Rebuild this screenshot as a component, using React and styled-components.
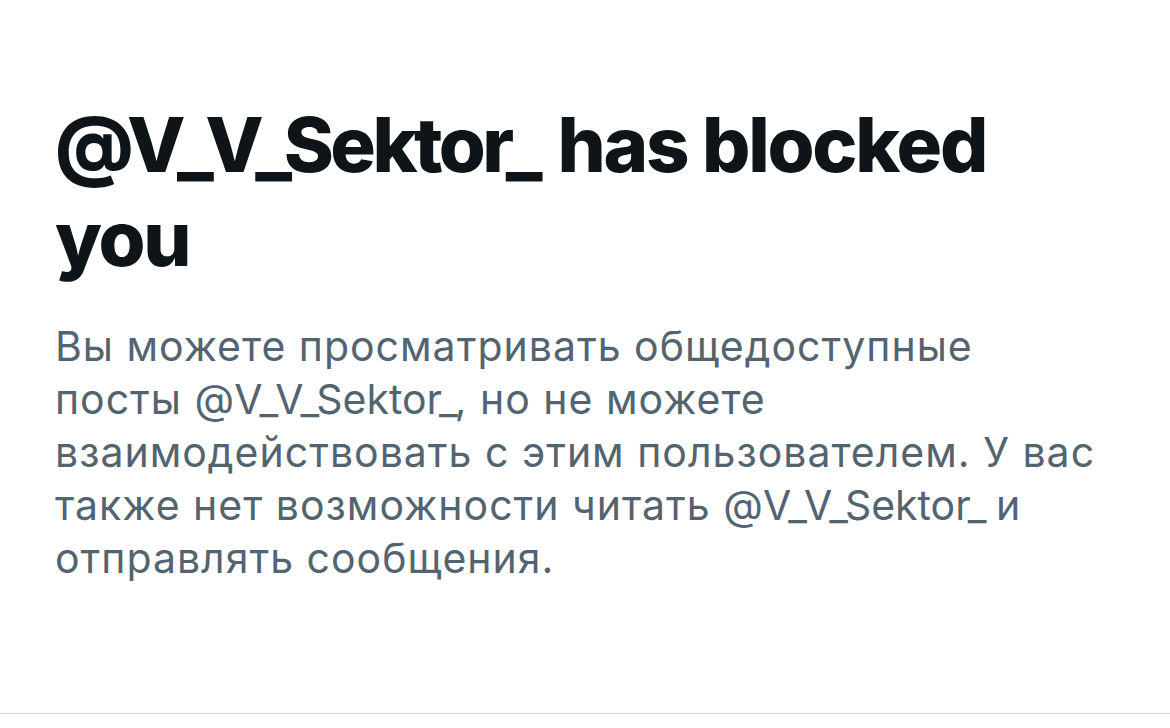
import styled, { createGlobalStyle } from "styled-components"

const GlobalStyle = createGlobalStyle`
    html, body {
        margin: 0;
        padding: 0;
        background: #ffffff;
    }
`

const Page = styled.div`
    width: 1170px;
    height: 714px;
    box-sizing: border-box;
    display: flex;
    flex-direction: column;
    border-bottom: 1px solid #d4d4d4;
    background: #ffffff;
`

const Content = styled.div`
    padding: 97px 40px 0 55px;
    display: flex;
    flex-direction: column;
`

const Title = styled.h1`
    margin: 0;
    font-family: Inter, "Liberation Sans", sans-serif;
    font-weight: 800;
    font-size: 76px;
    line-height: 94px;
    letter-spacing: -2.2px;
    color: #0f1419;
    max-width: 1000px;
`

const Desc = styled.p`
    margin: 35px 0 0;
    font-family: Inter, "Liberation Sans", sans-serif;
    font-weight: 400;
    font-size: 41px;
    line-height: 53px;
    letter-spacing: 1px;
    color: #536471;
    white-space: nowrap;
`

const HandleText = styled.span`
    letter-spacing: ${props => props.spacing}px;
    margin-right: ${props => props.after}px;
`

const Under = styled.span`
    margin: 0 ${props => props.tight}px;
`

function Handle({ tight, spacing, after = 0 }) {
    return (
        <HandleText spacing={spacing} after={after}>
            @V<Under tight={tight}>_</Under>V<Under tight={tight}>_</Under>Sektor<Under tight={tight}>_</Under>
        </HandleText>
    )
}

export default function App() {
    return (
        <>
            <GlobalStyle />
            <Page>
                <Content>
                    <Title>
                        <Handle tight={-5} spacing={-3.5} after={9} /> has blocked you
                    </Title>
                    <Desc>
                        Вы можете просматривать общедоступные<br />
                        посты <Handle tight={-3} spacing={0} />, но не можете<br />
                        взаимодействовать с этим пользователем. У вас<br />
                        также нет возможности читать <Handle tight={-3} spacing={0} /> и<br />
                        отправлять сообщения.
                    </Desc>
                </Content>
            </Page>
        </>
    )
}
